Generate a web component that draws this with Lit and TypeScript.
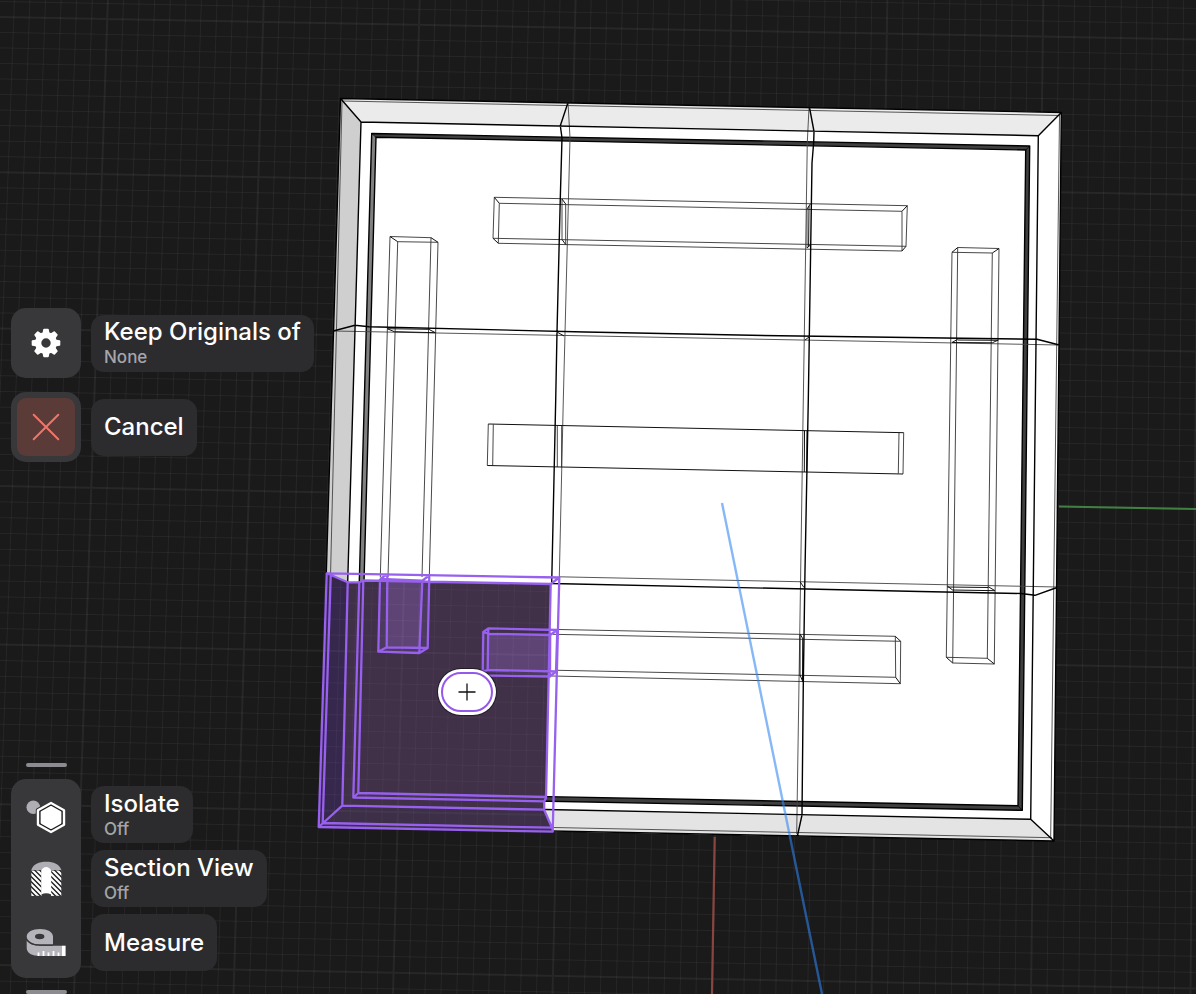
import { LitElement, html, svg, css } from "lit";
import { customElement } from "lit/decorators.js";

type Line = [number, number, number, number];

/** Ground grid: index 0 is the world axis, every tenth line is a major one. */
function groundGrid() {
  const minor: string[] = [];
  const major: string[] = [];
  const W = 1196;
  const H = 994;
  for (let k = -50; k <= 40; k++) {
    const i = k / 10;
    const d = `M${(731.5 + 155.9 * i).toFixed(1)} 0L${(712 + 159.5 * i).toFixed(1)} ${H}`;
    (k % 10 === 0 ? major : minor).push(d);
  }
  for (let k = -34; k <= 34; k++) {
    const j = k / 10;
    const bend = 0.55 * j * j;
    const d = `M0 ${(486 + 158 * j + bend).toFixed(1)}L${W} ${(509 + 158.2 * j + bend).toFixed(1)}`;
    (k % 10 === 0 ? major : minor).push(d);
  }
  return { minor: minor.join(""), major: major.join("") };
}

const GRID = groundGrid();
const path = (lines: Line[]) => lines.map(([a, b, c, d]) => `M${a} ${b}L${c} ${d}`).join("");

/** Hidden edges of the plate, seen through its faces. */
const HIDDEN: Line[] = [
  [342, 101, 1060, 115.5],
  [342, 101, 330.5, 576],
  [1059.5, 115.5, 1050.7, 837],
  [553, 827.5, 1052, 837.7],
  [568, 102.5, 570, 138],
  [570, 138, 563.3, 400],
  [563.3, 400, 559.3, 577],
  [809, 108, 807.3, 142],
  [807.3, 142, 803.3, 400],
  [803.3, 400, 796.7, 834],
  [333.5, 331, 1059, 345],
  [559, 576.8, 1057, 587],
];

/** Outlines of the five slots. */
const SLOTS: Line[] = [
  // top
  [494.3, 197.3, 907.3, 205.7], [499.3, 203.3, 902, 211.3],
  [493, 238.3, 906, 246.3], [498.3, 243.3, 902, 251],
  [494.3, 197.3, 493, 238.3], [499.3, 203.3, 498.3, 243.3],
  [907.3, 205.7, 906, 246.3], [902, 211.3, 902, 251],
  [562, 199, 562, 239.5], [565.7, 204, 565.7, 244.5],
  [807, 209, 807, 248],
  // left
  [390, 236.5, 431, 237.7], [397.7, 241.7, 438, 242.3],
  [390, 236.5, 380.3, 577], [397.7, 241.7, 388, 577],
  [431, 237.7, 422, 577], [438, 242.3, 429.3, 577],
  // right
  [957.7, 247.5, 999, 248.5], [952, 252.3, 992.3, 253],
  [952, 252.3, 946.3, 657.3], [957.7, 247.5, 952.7, 663],
  [992.3, 253, 987.3, 658.3], [999, 248.5, 994.3, 664],
  [946.3, 657.3, 987.3, 658.3], [952.7, 663, 994.3, 664],
  // centre
  [488.3, 424, 487.3, 465.5], [493.3, 424.5, 492.7, 465.5],
  [899, 432.5, 898.3, 473.5], [903.7, 432.7, 903, 474],
  [557.3, 426, 557.3, 467], [561.7, 426, 561.5, 467],
  // bottom
  [559, 629.5, 895.3, 636.3], [553, 634.3, 900.7, 641.3],
  [558, 670.3, 895.7, 677.3], [552, 676, 900.3, 683.7],
  [895.3, 636.3, 895.7, 677.3], [900.7, 641.3, 900.3, 683.7],
];

const SLOT_CORNERS: Line[] = [
  [494.3, 197.3, 499.3, 203.3], [493, 238.3, 498.3, 243.3],
  [907.3, 205.7, 902, 211.3], [906, 246.3, 902, 251],
  [562, 199, 565.7, 204], [562, 239.5, 565.7, 244.5],
  [810.3, 204, 807, 209], [810.3, 245, 807, 248],
  [390, 236.5, 397.7, 241.7], [431, 237.7, 438, 242.3],
  [387.3, 328.7, 394.3, 331.7], [428.3, 329, 435.3, 332.7],
  [387.3, 328.7, 428.3, 329.3], [394.3, 331.7, 435.3, 332.7],
  [957.7, 247.5, 952, 252.3], [999, 248.5, 992.3, 253],
  [946.3, 657.3, 952.7, 663], [987.3, 658.3, 994.3, 664],
  [952, 342.5, 957.7, 339.3], [992.3, 342.8, 998.3, 340],
  [952, 342.5, 992.3, 342.8], [957.7, 340, 998.3, 340.3],
  [947.3, 586, 953, 590.3], [988.3, 586.7, 995, 590.7],
  [947.3, 587, 988.3, 587.5], [953, 590, 995, 590.7],
  [488.3, 424, 903.7, 432.7], [487.3, 465.5, 903, 474],
  [895.3, 636.3, 900.7, 641.3], [895.7, 677.3, 900.3, 683.7],
  [800, 634, 803, 639], [800, 675, 803, 682],
  [800, 581.7, 804, 587.5], [557, 332, 564, 336], [805, 340, 809, 337],
  [804.5, 430.7, 804.3, 472], [807, 431, 806.7, 472],
  [800, 635, 800, 676], [802.7, 639, 802.5, 682],
  [809, 206, 808.6, 247],
];

/** Visible edges: rim, groove and the cuts that split the plate in nine. */
const EDGES = [
  "M318.7 827L340.5 98.5L1061.3 112.5L1054 841L552 831",
  "M347.7 582L361 122L1038.3 135.7L1030.7 819.3L545 809.5",
  "M340.5 98.5L361 122M1061.3 112.5L1038.3 135.7M1054 841L1030.7 819.3",
  "M568 102.5L560.3 125.7L562 138L560.3 198L557 332L555.7 400L551.7 583",
  "M809.5 107.5L814 131.5L813.7 142L812 163L809.3 337L808.3 400L805 570L803.3 683L802 815L797.3 836.5",
  "M333.3 331L355 325.3L369 326.7L585 332L780 335.8L1037 339.3L1059.3 345",
  "M551.7 583.5L920 591.5L1021 593.5L1035 595.3L1057 587.5",
].join("");

const PURPLE = [
  "M326.7 573.3L559.3 577.5L552.7 831.7L318.7 827Z",
  "M326.7 573.3L347.7 582.3L359.5 582.3L363.3 580.5L550.7 584L546 798L544.2 801.5V810L552.5 829",
  "M559.3 577.5L550.7 584",
  "M330.7 576L322.7 823L553.3 827.7",
  "M347.7 582.3L342.3 805.7L544.2 809.7M342.3 805.7L318.7 827",
  "M359.3 582.3L353.3 797.5L544.2 801.3M363.3 580.5L358.3 793L546 797M353.3 797.5L358.3 793",
  "M387.3 574.3L386.7 647.3L427.7 648L429.3 575.5M380 579L378.3 651.7L419.3 653L422.3 580.7",
  "M378.3 651.7L386.7 647.3M419.3 653L427.7 648M380 579L387.3 574.3M422.3 580.7L429.3 575.5M380 579L422.3 580.7",
  "M488.3 628.3L557.3 630L556 671.5L487.7 670Z",
  "M483.3 632L489 633.8L550.2 635L550 676.5L487.5 675.5L482.7 671.7Z",
  "M488.3 628.3L483.3 632M482.7 671.7L487.7 670M556 671.5L550 676.5M557.3 630L550.2 635",
].join("");

@customElement("model-viewport")
class ModelViewport extends LitElement {
  static styles = css`
    :host { display: block; min-width: 0; min-height: 0; }
    .scene { display: block; width: 100%; height: 100%; }
    .grid-minor { stroke: #fff; stroke-opacity: 0.055; stroke-width: 1; }
    .grid-major { stroke: #fff; stroke-opacity: 0.06; stroke-width: 2; }
    .line { fill: none; }
    .hidden { stroke: #444; stroke-width: 0.9; }
    .slot { stroke: #333; stroke-width: 0.9; }
    .corner { stroke: #111; stroke-width: 1; }
    .edge { stroke: #000; stroke-width: 1.4; stroke-linejoin: round; }
    .selected { stroke: #9860ee; stroke-width: 2.3; stroke-linejoin: round; }
    .pin {
      display: grid; place-items: center; box-sizing: border-box;
      width: 58px; height: 46px; padding: 3px; margin: 1px;
      border: 0; border-radius: 23px; background: #fff;
      box-shadow: 0 0 0 1px rgba(0, 0, 0, 0.45); cursor: pointer;
    }
    .ring {
      display: grid; place-items: center; box-sizing: border-box;
      width: 100%; height: 100%; border: 2px solid #9459ea; border-radius: 20px;
    }
  `;

  render() {
    return html`
      <svg class="scene" viewBox="0 0 1196 994" preserveAspectRatio="xMidYMid slice"
        role="group" aria-label="Model">
        <rect width="1196" height="994" fill="#1a1a1a"></rect>
        <path class="line grid-minor" d=${GRID.minor}></path>
        <path class="line grid-major" d=${GRID.major}></path>
        <path class="line" d="M714.7 837L712 994" stroke="#8a4540" stroke-width="2.2"></path>
        <path class="line" d="M1059 506.5L1196 509" stroke="#427f43" stroke-width="2.2"></path>

        <path d="M340.5 98.5L1061.3 112.5L1054 841L318.7 827Z" fill="#fff"></path>
        <path d="M340.5 98.5L361 122L347.7 582L342 806L318.7 827Z" fill="#cfcfcf"></path>
        <path d="M340.5 98.5L1061.3 112.5L1038.3 135.7L361 122Z" fill="#ebebeb"></path>
        <path d="M342 806L1030.7 819.3L1054 841L318.7 827Z" fill="#e4e4e4"></path>

        <path d="M371.7 133.5L376 137L358.3 793L353.3 797.5Z" fill="#808080"></path>
        <path fill="#3f3f3f"
          d="M371.7 133.5L1029.7 146L1022.3 810.3L353.3 797.5L358.3 793L1018 805.7L1025.7 150L376 137.3Z"></path>
        <path class="line edge" d="M371.7 133.5L1029.7 146L1022.3 810.3L353.3 797.5Z"></path>
        <path class="line edge" d="M376 137.3L1025.7 150L1018 805.7L358.3 793Z"></path>
        <path class="line" stroke="#000" stroke-width="0.8"
          d="M371.7 133.5L376 137.3M1029.7 146L1025.7 150M1022.3 810.3L1018 805.7"></path>

        <path class="line hidden" d=${path(HIDDEN)}></path>
        <path class="line slot" d=${path(SLOTS)}></path>
        <path class="line corner" d=${path(SLOT_CORNERS)}></path>
        <path class="line edge" d=${EDGES}></path>

        <path fill="#403149"
          d="M326.7 573.3L347.7 582.3L359.5 582.3L363.3 580.5L550.7 584L546 798L544.2 801.5V810L552.7 831.7L318.7 827Z"></path>
        <path d="M326.7 573.3L347.7 582.3L342.3 805.7L318.7 827Z" fill="#37294e"></path>
        <path d="M342.3 805.7L544.2 810L552.7 831.7L318.7 827Z" fill="#3c2f48"></path>
        <path d="M381 580L428 581L427 648L419 653L378.3 651.7Z" fill="#4e3b60"></path>
        <path d="M387.3 580.5L422 581L420 647.7L386.7 647.3Z" fill="#5e4576"></path>
        <path d="M483.3 632L550.2 634L550 676.5L482.7 672Z" fill="#4e3b60"></path>
        <path d="M489 634L550.2 635L550 671.5L487.7 670Z" fill="#5e4576"></path>
        <clipPath id="cell"><path d="M326.7 573.3L347.7 582.3L550.7 584L546 798L552.7 831.7L318.7 827Z"></path></clipPath>
        <g clip-path="url(#cell)" opacity="0.7">
          <path class="line grid-minor" d=${GRID.minor}></path>
          <path class="line grid-major" d=${GRID.major}></path>
        </g>
        <path class="line selected" d=${PURPLE}></path>

        <path class="line" d="M722 503L822 994" stroke="#2e85f1" stroke-opacity="0.58" stroke-width="2.4"></path>

        <foreignObject x="437" y="668" width="62" height="50">
          <button class="pin" aria-label="Add to selection">
            <span class="ring">
              <svg width="18" height="18" viewBox="0 0 18 18" aria-hidden="true">
                <path d="M9 0.5V17.5M0.5 9H17.5" stroke="#111" stroke-width="1.3"></path>
              </svg>
            </span>
          </button>
        </foreignObject>
      </svg>
    `;
  }
}

const gearIcon = html`
  <svg class="icon" viewBox="0 0 40 40" aria-hidden="true">
    <circle cx="20" cy="20" r="7.8" fill="none" stroke="#fff" stroke-width="6.2"></circle>
    ${[0, 45, 90, 135, 180, 225, 270, 315].map(
      (a) => svg`<path d="M16.4 11L17.2 6.4Q17.4 5.7 18.2 5.7H21.8Q22.6 5.7 22.8 6.4L23.6 11Z"
        fill="#fff" transform="rotate(${a} 20 20)"></path>`,
    )}
  </svg>`;

const crossIcon = html`
  <svg class="icon" viewBox="0 0 40 40" aria-hidden="true">
    <path d="M7.7 7.7L32.3 32.3M32.3 7.7L7.7 32.3" stroke="#f0756a" stroke-width="2" stroke-linecap="round"></path>
  </svg>`;

const isolateIcon = html`
  <svg class="icon" viewBox="0 -2 40 40" aria-hidden="true">
    <circle cx="7.3" cy="10.3" r="6.8" fill="#aeaeb4"></circle>
    <path d="M25 6L38 13.2V27.8L25 35L12 27.8V13.2Z" fill="#38383a" stroke="#38383a" stroke-width="4.5" stroke-linejoin="round"></path>
    <path d="M25 6L38 13.2V27.8L25 35L12 27.8V13.2Z" fill="#1c1c1e" stroke="#fff" stroke-width="2.4" stroke-linejoin="round"></path>
    <path d="M25 9.9L34.4 15.2V25.8L25 31.1L15.6 25.8V15.2Z" fill="#fff" stroke="#fff" stroke-width="2" stroke-linejoin="round"></path>
  </svg>`;

const sectionIcon = html`
  <svg class="icon" viewBox="0 -1 40 40" aria-hidden="true">
    <clipPath id="walls"><path d="M5.3 10.5H15.5V36Q10 35.5 5.3 36ZM25 10.5H35.3V36Q30 35.5 25 36Z"></path></clipPath>
    <path d="M5.3 10C7 4 13 1.7 20.3 1.7S33.5 4 35.3 10Z" fill="#aeaeb4"></path>
    <path d="M5.3 10H35.3V36H5.3Z" fill="#1c1c1e" clip-path="url(#walls)"></path>
    <path clip-path="url(#walls)" stroke="#fff" stroke-width="2.2" fill="none"
      d="M3 -23L43 17M3 -18L43 22M3 -13L43 27M3 -8L43 32M3 -3L43 37M3 2L43 42M3 7L43 47M3 12L43 52M3 17L43 57M3 22L43 62M3 27L43 67M3 32L43 72"></path>
    <path d="M15.2 34.5V10.5Q17 7 20.2 7T25.2 10.5V34.5Q20.2 32 15.2 34.5Z" fill="#fff"></path>
  </svg>`;

const measureIcon = html`
  <svg class="icon" viewBox="0 -1 40 40" aria-hidden="true">
    <path fill="#b4b4ba" fill-rule="evenodd"
      d="M0.7 12.5C0.7 8 6.5 5 14 5S27 8 27 12.5V20.5H14C7 20.5 0.7 17 0.7 12.5Z
         M9 12.5A4.7 2.7 0 0 0 18.4 12.5A4.7 2.7 0 0 0 9 12.5Z"></path>
    <path d="M0.7 16.5C3 20 8 21.7 14 21.7H36V32H14C6 32 0.7 29 0.7 24Z" fill="#b4b4ba"></path>
    <path d="M1 15.8C3 19.4 8 21.1 14 21.1H27" fill="none" stroke="#38383a" stroke-width="1.2"></path>
    <path d="M36 21.7H39.6V32H36Z" fill="#fff"></path>
    <path d="M12.5 28.5V32M17.5 27V32M22.5 28.5V32M27.5 27V32M32.5 28.5V32" stroke="#fff" stroke-width="1.8"></path>
  </svg>`;

const TOOLS = [
  { id: "isolate", name: "Isolate", state: "Off", icon: isolateIcon },
  { id: "section", name: "Section View", state: "Off", icon: sectionIcon },
  { id: "measure", name: "Measure", state: "", icon: measureIcon },
];

@customElement("app-root")
class AppRoot extends LitElement {
  static styles = css`
    :host {
      display: grid;
      grid-template: 100vh / minmax(0, 1fr);
      overflow: hidden;
      background: #1a1a1a;
      color: #fff;
      font-family: Inter, "Liberation Sans", sans-serif;
    }
    model-viewport, .side { grid-area: 1 / 1; }
    .side {
      z-index: 1;
      justify-self: start;
      box-sizing: border-box;
      display: flex;
      flex-direction: column;
      align-items: flex-start;
      padding: 308px 0 0 11px;
    }
    .actions { display: flex; flex-direction: column; gap: 14px; }
    .action { display: flex; align-items: center; gap: 10px; }
    button { font: inherit; color: inherit; border: 0; cursor: pointer; }
    .square {
      display: grid; place-items: center; box-sizing: border-box;
      width: 70px; height: 70px; padding: 6px;
      border-radius: 15px; background: #38383a;
    }
    .danger {
      display: grid; place-items: center;
      width: 58px; height: 58px; border-radius: 9px; background: #5b3b38;
    }
    .icon { display: block; width: 40px; height: 40px; }
    .label {
      display: flex; flex-direction: column; justify-content: center;
      box-sizing: border-box; height: 57px; padding: 0 13px;
      border-radius: 13px; background: #2c2c2e; white-space: nowrap;
    }
    .name { font-size: 24px; line-height: 28px; font-weight: 500; }
    .state { font-size: 17px; line-height: 22px; font-weight: 500; color: #a5a5ab; }
    .tools {
      display: grid; grid-template-columns: 70px auto;
      column-gap: 10px; row-gap: 12px; margin-top: auto;
    }
    .handle {
      grid-column: 1; justify-self: center;
      width: 41px; height: 4px; border-radius: 2px; background: #8b8b90;
    }
    .bar {
      grid-column: 1; display: flex; flex-direction: column; gap: 7px;
      padding: 7px 0; border-radius: 15px; background: #38383a;
    }
    .tool {
      display: grid; place-items: center; width: 70px; height: 57px;
      padding: 0; background: none;
    }
    .labels {
      grid-column: 2; display: flex; flex-direction: column;
      align-items: flex-start; gap: 7px; padding: 7px 0;
    }
  `;

  render() {
    return html`
      <model-viewport></model-viewport>
      <div class="side">
        <div class="actions">
          <div class="action">
            <button class="square" id="keep">${gearIcon}</button>
            <label class="label" for="keep">
              <span class="name">Keep Originals of</span>
              <span class="state">None</span>
            </label>
          </div>
          <div class="action">
            <button class="square" id="cancel"><span class="danger">${crossIcon}</span></button>
            <label class="label" for="cancel"><span class="name">Cancel</span></label>
          </div>
        </div>
        <div class="tools">
          <div class="handle"></div>
          <div class="bar">
            ${TOOLS.map((t) => html`<button class="tool" id=${t.id}>${t.icon}</button>`)}
          </div>
          <div class="labels">
            ${TOOLS.map(
              (t) => html`<label class="label" for=${t.id}>
                <span class="name">${t.name}</span>
                ${t.state ? html`<span class="state">${t.state}</span>` : ""}
              </label>`,
            )}
          </div>
          <div class="handle"></div>
        </div>
      </div>
    `;
  }
}
